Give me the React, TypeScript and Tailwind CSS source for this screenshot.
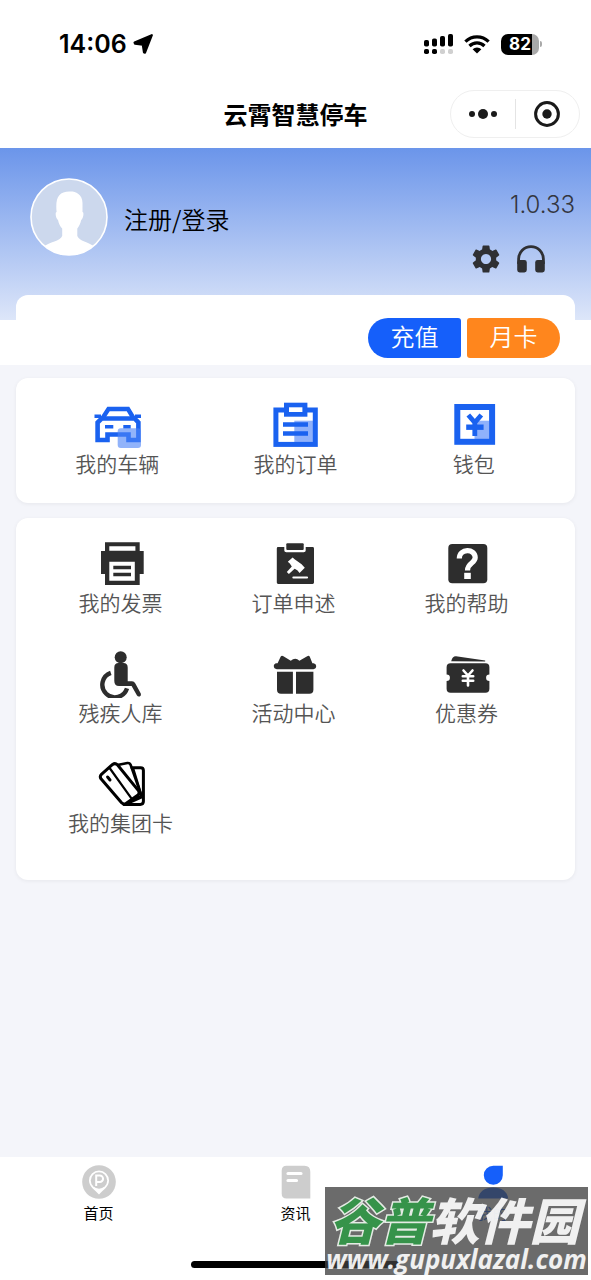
import type { ReactNode } from "react";
import { MdSettings } from "react-icons/md";

const BLUE = "#1a62f0";
const DARK = "#2d2d2d";

function CarIcon() {
  return (
    <svg viewBox="0 0 48 48" className="size-12" fill="none" aria-hidden="true">
      <path d="M4.6 39V21.5L8.6 17.5H41.6L45.4 21.5V39H35.5V33.5H14.5V39Z" stroke={BLUE} strokeWidth="4.6" />
      <path d="M9 18L15.5 8H35L41 18" stroke={BLUE} strokeWidth="4.4" />
      <path d="M1.5 15.2H8M42 15.2H48" stroke={BLUE} strokeWidth="3.6" />
      <path d="M12 25.7H20.3M30.3 25.7H37.7" stroke={BLUE} strokeWidth="3.4" />
      <rect x="24.7" y="27.3" width="23.3" height="19.7" rx="3" fill="#4d84f7" fillOpacity=".62" />
    </svg>
  );
}

function OrderIcon() {
  return (
    <svg viewBox="0 0 48 48" className="size-12" fill="none" aria-hidden="true">
      <rect x="23.3" y="19.7" width="20" height="21.5" fill="#8fb1fb" />
      <rect x="4.9" y="9" width="39.4" height="34.4" stroke={BLUE} strokeWidth="5" />
      <rect x="13" y="1.7" width="23.4" height="14" fill={BLUE} />
      <rect x="18" y="6.3" width="13.4" height="4.7" fill="#fff" />
      <path d="M12 23.5H37M12 32.5H37" stroke={BLUE} strokeWidth="4.3" />
    </svg>
  );
}

function WalletIcon() {
  return (
    <svg viewBox="0 0 48 48" className="size-12" fill="none" aria-hidden="true">
      <rect x="24.5" y="19.7" width="15" height="18.6" fill="#8fb1fb" />
      <rect x="7.3" y="6" width="34.8" height="34.8" stroke={BLUE} strokeWidth="6" />
      <path d="M18.3 14L24.8 21.5L31.3 14M24.8 21V35" stroke={BLUE} strokeWidth="4.8" />
      <path d="M16.2 26.2H33.6" stroke={BLUE} strokeWidth="5.4" />
    </svg>
  );
}

function PrinterIcon() {
  return (
    <svg viewBox="0 0 48 48" className="size-12" fill={DARK} aria-hidden="true">
      <path
        fillRule="evenodd"
        d="M8 2.3H42.7V11H46.7V34H42.7V45H8V34H4V11H8ZM12.3 6.3V10.7H38.4V6.3ZM12.3 21.7V40.7H37.8V21.7Z"
      />
      <path d="M16.3 25.7H34V29.3H16.3ZM16.3 32.7H34V36.3H16.3Z" />
    </svg>
  );
}

function AppealIcon() {
  return (
    <svg viewBox="0 0 48 48" className="size-12" fill={DARK} aria-hidden="true">
      <path d="M8 7H14.3V10.5Q14.3 12.3 16.3 12.3H33.7Q35.7 12.3 35.7 10.5V7H42.6Q44 7 44 8.4V42.6Q44 44 42.6 44H8.2Q6.8 44 6.8 42.6V8.4Q6.8 7 8 7Z" />
      <rect x="16.3" y="3.3" width="17.4" height="6.8" rx="1" />
      <path
        d="M22.6 17.4L24.6 19.2L31.6 24.2L34.8 27.8L29.6 32.9L27.3 30.2L24.6 28.8L18.9 33.9L16.8 32L21.8 26.4L19.8 23.6L17.8 21.8Z"
        fill="#fff"
      />
      <path d="M23.4 37.5H37" stroke="#fff" strokeWidth="2.2" strokeLinecap="round" />
    </svg>
  );
}

function HelpIcon() {
  return (
    <svg viewBox="0 0 48 48" className="size-12" fill="none" aria-hidden="true">
      <rect x="5.3" y="4" width="39" height="39.3" rx="4" fill={DARK} />
      <path
        d="M16.3 18.6C16.3 8.2 32.2 8.2 32.2 17.6C32.2 23.4 24.5 22.8 24.5 30.4"
        stroke="#fff"
        strokeWidth="5.2"
      />
      <rect x="21.2" y="32.8" width="6.6" height="6.2" fill="#fff" />
    </svg>
  );
}

function WheelchairIcon() {
  return (
    <svg viewBox="0 0 48 48" className="size-12" fill="none" aria-hidden="true">
      <circle cx="23.7" cy="7.2" r="6" fill={DARK} />
      <path
        d="M17.3 17.5Q17.3 13 21.5 13H26.5Q30.7 13 30.7 17.5V31.3H35Q37.2 31.3 38.2 33.2L43.8 43.6Q44.6 45.6 42.8 46.4Q40.9 47 40 45.4L34.6 36H22Q17.3 36 17.3 31Z"
        fill={DARK}
      />
      <path d="M13.8 22.8A12.6 12.6 0 1 0 30 38.4" stroke={DARK} strokeWidth="4.4" />
    </svg>
  );
}

function GiftIcon() {
  return (
    <svg viewBox="0 0 48 48" className="size-12" fill={DARK} aria-hidden="true">
      <path d="M6.5 13.2H7.6L10.6 6.8Q11.6 5 13.4 6.2L20.8 10.8Q23 8.8 25.2 8.8Q27.4 8.8 29.4 10.8L37.2 6.2Q39 5 39.8 6.8L42.4 13.2H43.6Q46.2 13.6 46.2 16.1Q46.2 19 43.4 19.2H6.8Q3.8 19 3.8 16.1Q3.8 13.6 6.5 13.2Z" />
      <path d="M7 21.7H22.9V43.8H11Q7 43.8 7 39.8ZM26 21.7H43.4V39.8Q43.4 43.8 39.4 43.8H26Z" />
    </svg>
  );
}

function CouponIcon() {
  return (
    <svg viewBox="0 0 48 48" className="size-12" fill="none" aria-hidden="true">
      <path d="M8.2 11.2Q9.4 6 13 6.2L42.2 10.6V11.4Z" fill={DARK} />
      <path
        d="M7.6 13.2H42.4Q46.4 13.2 46.4 17.2V24.4A3.3 3.3 0 0 0 46.4 31V38.8Q46.4 42.8 42.4 42.8H7.6Q3.6 42.8 3.6 38.8V31A3.3 3.3 0 0 0 3.6 24.4V17.2Q3.6 13.2 7.6 13.2Z"
        fill={DARK}
      />
      <path d="M20.5 20.5L25 25.6L29.5 20.5M25 25.5V35.5M19.8 26.2H30.2M19.8 30.8H30.2" stroke="#fff" strokeWidth="2.6" strokeLinecap="round" />
    </svg>
  );
}

function CardsIcon() {
  return (
    <svg viewBox="0 0 48 48" className="size-12" fill="none" stroke="#000" strokeWidth="3" strokeLinejoin="round" strokeLinecap="round" aria-hidden="true">
      <path d="M35 7.7H43.6Q46.4 7.7 46.4 10.5V41.3Q46.4 44.4 43.2 44.4H27" />
      <path d="M20.5 5L30.5 3Q32.8 2.8 33.6 4.8L44.4 35.6L28 44.4" strokeWidth="2.6" />
      <path d="M36.5 9L44.5 35M31 43.5L44.5 37.5" strokeWidth="2" />
      <path d="M4.4 14.4L15.6 4.4Q18.2 2.6 20.4 4.8L41.4 30.6Q43 33 41 35L29 43.4Q26.8 45 24.6 42.8L4 18.8Q2.4 16.4 4.4 14.4Z" fill="#fff" strokeWidth="3" />
      <path d="M12.6 8L34.4 38.4" strokeWidth="2.2" />
      <path d="M10.6 17L13 20" strokeWidth="3" />
    </svg>
  );
}

function HeadphonesIcon() {
  return (
    <svg viewBox="0 0 30 30" className="size-[30px]" fill="none" aria-hidden="true">
      <path d="M2.6 20V15A12.4 12.4 0 0 1 27.4 15V20" stroke="#2f3033" strokeWidth="2.8" />
      <rect x="1.2" y="16" width="9.6" height="12.4" rx="2.4" fill="#2f3033" />
      <rect x="19.2" y="16" width="9.6" height="12.4" rx="2.4" fill="#2f3033" />
    </svg>
  );
}

function Avatar() {
  return (
    <svg viewBox="0 0 78 78" className="size-[78px] shrink-0" aria-hidden="true">
      <defs>
        <clipPath id="avatar-circle">
          <circle cx="39" cy="39" r="38" />
        </clipPath>
      </defs>
      <circle cx="39" cy="39" r="38" fill="#ccd8ed" />
      <path
        clipPath="url(#avatar-circle)"
        d="M39.5 13.5C44 13 52.500 15 52.500 25V34C54.400 34 53.200 41 51.200 42C50.400 46 48.800 48.500 47.300 50.500V58C49.500 63.500 58 63.500 65 69L66 78H12L13 69C20 63.500 30 63.500 32.200 58V50.500C30.300 48.500 28.800 46 28 42C25.800 41 24.800 34 26.600 34C25.200 20 28.500 13.500 39.500 13.500Z"
        fill="#fff"
      />
      <circle cx="39" cy="39" r="38" fill="none" stroke="#fff" strokeWidth="1.600" />
    </svg>
  );
}

function StatusBar() {
  return (
    <div className="flex h-[88px] items-center justify-between pr-[49px] pl-[59px]">
      <div className="flex items-center gap-1.5">
        <span className="font-['Inter',sans-serif] text-[25px] leading-8 font-semibold">14:06</span>
        <svg viewBox="0 0 20 20" className="size-5" aria-hidden="true">
          <path
            d="M18.800 1.200L1.600 8.600L2 9.600L9.800 10.600L11 18.400L12 18.600Z"
            fill="#000"
            stroke="#000"
            strokeWidth="2.200"
            strokeLinejoin="round"
          />
        </svg>
      </div>
      <div className="flex items-center gap-[11px]">
        <svg viewBox="0 0 29 20" className="h-5 w-[29px]" aria-hidden="true">
          <rect x="0" y="6" width="5" height="6.500" rx="1.800" />
          <rect x="8" y="4.500" width="5" height="8" rx="1.800" />
          <rect x="16" y="2" width="5" height="10.500" rx="1.800" />
          <rect x="24" y="0" width="5" height="12.500" rx="1.800" />
          <rect x="0" y="15" width="5" height="5" rx="1.800" />
          <rect x="8" y="15" width="5" height="5" rx="1.800" />
          <rect x="16" y="15" width="5" height="5" rx="1.800" fill="#d0d0d0" />
          <rect x="24" y="15" width="5" height="5" rx="1.800" fill="#d0d0d0" />
        </svg>
        <svg viewBox="0 0 26 20" className="h-5 w-[26px]" fill="none" stroke="#000" strokeWidth="3.200" aria-hidden="true">
          <path d="M1.400 7.600A16.500 16.500 0 0 1 24.600 7.600" />
          <path d="M5.500 12A10.600 10.600 0 0 1 20.500 12" />
          <path d="M13 19.400L8.600 15.200A6.400 6.400 0 0 1 17.400 15.200Z" fill="#000" stroke="none" />
        </svg>
        <div className="flex items-center gap-px">
          <span className="flex h-[21px] w-[38px] items-center justify-center rounded-[7px] bg-[linear-gradient(to_right,#000_82%,#a9a9a9_82%)] font-['Inter',sans-serif] text-[17px] leading-5 font-bold text-white">
            82
          </span>
          <span className="h-1.5 w-0.5 rounded-r-full bg-[#a9a9a9]" />
        </div>
      </div>
    </div>
  );
}

function TitleBar() {
  return (
    <div className="grid h-[60px] grid-cols-[1fr_auto_1fr] items-center px-[11px] pb-2">
      <h1 className="col-start-2 text-2xl leading-8 font-bold">云霄智慧停车</h1>
      <div className="flex h-12 w-[130px] items-center justify-self-end rounded-full border border-[#efefef]">
        <button type="button" aria-label="更多" className="flex h-full flex-1 items-center justify-center">
          <svg viewBox="0 0 30 12" className="h-3 w-[30px]" fill="#1a1a1a" aria-hidden="true">
            <circle cx="4" cy="6" r="3" />
            <circle cx="15" cy="6" r="5" />
            <circle cx="26" cy="6" r="3" />
          </svg>
        </button>
        <span className="h-[30px] w-px bg-[#e4e4e4]" />
        <button type="button" aria-label="关闭" className="flex h-full flex-1 items-center justify-center">
          <svg viewBox="0 0 26 26" className="size-[26px]" fill="none" aria-hidden="true">
            <circle cx="13" cy="13" r="11.400" stroke="#1a1a1a" strokeWidth="3" />
            <circle cx="13" cy="13" r="4.700" fill="#1a1a1a" />
          </svg>
        </button>
      </div>
    </div>
  );
}

function Profile() {
  return (
    <section className="bg-[linear-gradient(to_bottom,#6b95ea_0px,#dde6f9_172px,#fff_172px)] px-4 pt-[30px]">
      <div className="flex items-start justify-between pl-3.5">
        <button type="button" className="flex items-center gap-4 text-left">
          <Avatar />
          <span className="pt-1 text-2xl leading-8 font-[350]">注册/登录</span>
        </button>
        <div className="flex flex-col items-end gap-[22px] pt-[11px]">
          <span className="font-['Inter',sans-serif] text-2xl leading-8 font-[350] text-[#33363f]">1.0.33</span>
          <div className="flex items-center gap-3.5 pr-[29px]">
            <button type="button" aria-label="设置" className="flex size-8 items-center justify-center">
              <MdSettings className="size-[34px] shrink-0 text-[#2f3033]" />
            </button>
            <button type="button" aria-label="客服" className="flex h-8 items-center">
              <HeadphonesIcon />
            </button>
          </div>
        </div>
      </div>
      <div className="mt-5 flex h-[70px] justify-end gap-1.5 rounded-t-xl bg-white pt-[23px] pr-[15px]">
        <button type="button" className="h-10 w-[93px] rounded-l-[20px] rounded-r-[3px] bg-[#155ffa] pb-1 text-2xl leading-8 font-[350] text-white">
          充值
        </button>
        <button type="button" className="h-10 w-[93px] rounded-l-[3px] rounded-r-[20px] bg-[#ff861d] pb-1 text-2xl leading-8 font-[350] text-white">
          月卡
        </button>
      </div>
    </section>
  );
}

type Entry = { label: string; icon: ReactNode };

const mainEntries: Entry[] = [
  { label: "我的车辆", icon: <CarIcon /> },
  { label: "我的订单", icon: <OrderIcon /> },
  { label: "钱包", icon: <WalletIcon /> },
];

const moreEntries: Entry[] = [
  { label: "我的发票", icon: <PrinterIcon /> },
  { label: "订单申述", icon: <AppealIcon /> },
  { label: "我的帮助", icon: <HelpIcon /> },
  { label: "残疾人库", icon: <WheelchairIcon /> },
  { label: "活动中心", icon: <GiftIcon /> },
  { label: "优惠券", icon: <CouponIcon /> },
  { label: "我的集团卡", icon: <CardsIcon /> },
];

function EntryButton({ label, icon }: Entry) {
  return (
    <button type="button" className="flex flex-col items-center gap-0.5">
      {icon}
      <span className="text-[21px] leading-6 font-[350] whitespace-nowrap text-[#555]">{label}</span>
    </button>
  );
}

function TabBar() {
  return (
    <nav className="flex flex-col bg-white pt-2 pb-3">
      <div className="grid grid-cols-3 text-[15px] leading-5">
        <a href="#home" className="flex flex-col items-center gap-1">
          <svg viewBox="0 0 34 34" className="size-[34px]" fill="none" aria-hidden="true">
            <circle cx="17" cy="17" r="16.800" fill="#cdcdcd" />
            <path d="M17 5.500A10 10 0 0 1 27 15.500C27 21.500 21.500 24.500 17 29.500C12.500 24.500 7 21.500 7 15.500A10 10 0 0 1 17 5.500Z" fill="#fff" />
            <circle cx="17" cy="15.500" r="8.200" fill="#cdcdcd" />
            <path d="M14.200 21V10.500H17.800A3.200 3.200 0 0 1 17.800 17H14.200" stroke="#fff" strokeWidth="2" />
          </svg>
          首页
        </a>
        <a href="#news" className="flex flex-col items-center gap-1">
          <svg viewBox="0 0 34 34" className="size-[34px]" aria-hidden="true">
            <path d="M7.500 .8H25.500Q31.300 .8 31.300 6.800V33.500H7.500Q2.700 33.500 2.700 28.500V5.800Q2.700 .8 7.500 .8Z" fill="#cdcdcd" />
            <path d="M9 8.500H22M9 15.500H17.500" stroke="#fff" strokeWidth="3.200" strokeLinecap="round" />
          </svg>
          资讯
        </a>
        <a href="#mine" aria-current="page" className="flex flex-col items-center gap-1 text-[#155ffa]">
          <svg viewBox="0 0 34 34" className="size-[34px]" fill="#155ffa" aria-hidden="true">
            <path d="M17.300 .8H26.800V10.300A9.500 9.500 0 1 1 17.300 .8Z" />
            <path d="M2.200 33.500C3 26.500 9 22.600 17.200 22.600S31.400 26.500 32.200 33.500Z" />
          </svg>
          我的
        </a>
      </div>
      <span className="mt-[38px] h-[7px] w-[209px] self-center rounded-full bg-black" />
    </nav>
  );
}

function Watermark() {
  return (
    <div className="pointer-events-none absolute right-[3px] bottom-[5px] flex h-[88px] w-[263px] flex-col items-center bg-[#3e3e3e]/77 pt-1.5 text-white/90">
      <p className="pr-1 text-[50px] leading-[50px] font-black whitespace-nowrap italic">
        <span className="text-[#36934a] [paint-order:stroke_fill] [-webkit-text-stroke:3px_#e4ebe4]">谷普</span>
        软件园
      </p>
      <p className="font-['Open_Sans',sans-serif] text-[26px] leading-8 font-bold whitespace-nowrap italic">www.gupuxlazal.com</p>
    </div>
  );
}

export default function App() {
  return (
    <div className="relative flex min-h-screen flex-col bg-[#f4f5fa] font-['Noto_Sans_CJK_SC',sans-serif] text-black">
      <header className="bg-white">
        <StatusBar />
        <TitleBar />
      </header>
      <main className="flex grow flex-col">
        <Profile />
        <section className="mx-4 mt-[13px] grid grid-cols-3 rounded-xl bg-white px-3 pt-[23px] pb-7 shadow-[0_1px_4px_rgba(0,0,0,0.06)]">
          {mainEntries.map((entry) => (
            <EntryButton key={entry.label} {...entry} />
          ))}
        </section>
        <section className="mx-4 mt-[15px] grid grid-cols-3 gap-y-9 rounded-xl bg-white pt-[22px] pr-[22px] pb-[46px] pl-[18px] shadow-[0_1px_4px_rgba(0,0,0,0.06)]">
          {moreEntries.map((entry) => (
            <EntryButton key={entry.label} {...entry} />
          ))}
        </section>
      </main>
      <TabBar />
      <Watermark />
    </div>
  );
}
